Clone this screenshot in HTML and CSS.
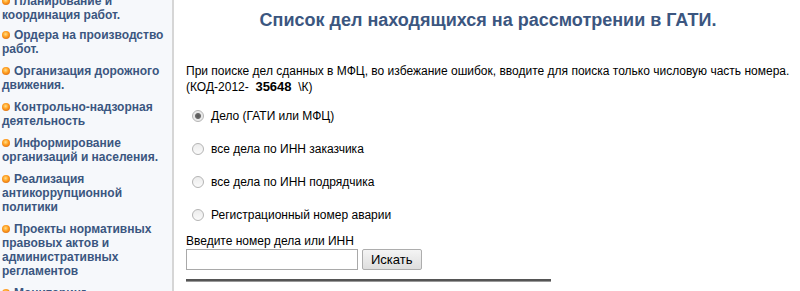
FILE: index.html
```html
<!DOCTYPE html>
<html lang="ru">
<head>
    <meta charset="UTF-8">
    <title>Список дел ГАТИ</title>
    <link rel="stylesheet" href="styles.css">
</head>
<body>
<div class="page">
    <!-- left menu -->
    <div class="sidebar">
        <ul class="menu">
            <li><a href="#">Планирование и координация работ.</a></li>
            <li><a href="#">Ордера на производство работ.</a></li>
            <li><a href="#">Организация дорожного движения.</a></li>
            <li><a href="#">Контрольно-надзорная деятельность</a></li>
            <li><a href="#">Информирование организаций и населения.</a></li>
            <li><a href="#">Реализация антикоррупционной политики</a></li>
            <li><a href="#">Проекты нормативных правовых актов и административных регламентов</a></li>
            <li><a href="#">Мониторинг</a></li>
        </ul>
    </div>

    <!-- search -->
    <div class="content">
        <h2 class="title">Список дел находящихся на рассмотрении в ГАТИ.</h2>
        <p class="note">При поиске дел сданных в МФЦ, во избежание ошибок, вводите для поиска только числовую часть номера.<br>
            (КОД-2012- &nbsp;<b class="num">35648</b>&nbsp; \К)</p>
        <div class="options">
            <label class="option"><input type="radio" name="mode" checked> Дело (ГАТИ или МФЦ)</label>
            <label class="option"><input type="radio" name="mode"> все дела по ИНН заказчика</label>
            <label class="option"><input type="radio" name="mode"> все дела по ИНН подрядчика</label>
            <label class="option"><input type="radio" name="mode"> Регистрационный номер аварии</label>
        </div>
        <div class="search">
            <label for="query">Введите номер дела или ИНН</label>
            <div class="search-row">
                <input type="text" id="query">
                <button>Искать</button>
            </div>
        </div>
        <hr class="line">
    </div>
</div>
</body>
</html>
```

FILE: styles.css
```css
body {
    margin: 0;
    font-family: "Liberation Sans", Arial, sans-serif;
    font-size: 12px;
    color: #000;
    background: #fff;
    overflow: hidden;
}
.page {
    display: flex;
    height: 291px;
    overflow: hidden;
}
.sidebar {
    width: 172px;
    flex-shrink: 0;
    background: #f6f8fb;
    border-right: 2px solid #d6d6d6;
}
.menu {
    list-style: none;
    margin: -6px 0 0 0;
    padding: 0 4px 0 2px;
}
.menu li {
    margin-bottom: 8px;
    line-height: 14px;
}
.menu li:first-child {
    margin-bottom: 6px;
}
.menu a {
    color: #3b5680;
    font-weight: bold;
    text-decoration: none;
}
.menu a:before {
    content: "";
    display: inline-block;
    width: 8px;
    height: 8px;
    margin-right: 4px;
    border-radius: 50%;
    background: radial-gradient(circle at 45% 40%, #ffe08a 0, #ff9a1a 45%, #e0761a 75%, #c9a98a 100%);
}
.content {
    flex: 1;
    padding: 0 10px 0 12px;
}
.title {
    margin: 9px 0 0 0;
    text-align: center;
    font-size: 18px;
    line-height: 22px;
    color: #3b5680;
}
.note {
    margin: 33px 0 0 0;
    line-height: 15px;
}
.num {
    font-size: 13px;
}
.options {
    display: flex;
    flex-direction: column;
    gap: 19px;
    margin-top: 14px;
    padding-left: 6px;
}
.option {
    display: flex;
    align-items: center;
    height: 14px;
    gap: 7px;
}
.option input {
    appearance: none;
    margin: 0;
    width: 12px;
    height: 12px;
    border: 1px solid #b4b4b4;
    border-radius: 50%;
    background: linear-gradient(#ececec, #fafafa);
    box-sizing: border-box;
}
.option input:checked {
    background: radial-gradient(circle, #555 0, #6a6a6a 2.5px, #e6e6e6 3.5px, #f6f6f6 100%);
}
.search {
    margin-top: 12px;
}
.search label {
    display: block;
    line-height: 15px;
}
.search-row {
    display: flex;
    gap: 4px;
}
.search-row input {
    width: 172px;
    height: 21px;
    box-sizing: border-box;
    border: 1px solid #a9a9a9;
    margin: 0;
}
.search-row button {
    height: 21px;
    padding: 0 8px;
    font-family: "Liberation Sans", Arial, sans-serif;
    font-size: 13px;
    border: 1px solid #adadad;
    border-radius: 2px;
    background: linear-gradient(#f4f4f4, #dedede);
    color: #000;
}
.line {
    width: 365px;
    margin: 9px 0 0 0;
    border: none;
    border-top: 2px solid #555;
    border-bottom: 1px solid #999;
}
```
